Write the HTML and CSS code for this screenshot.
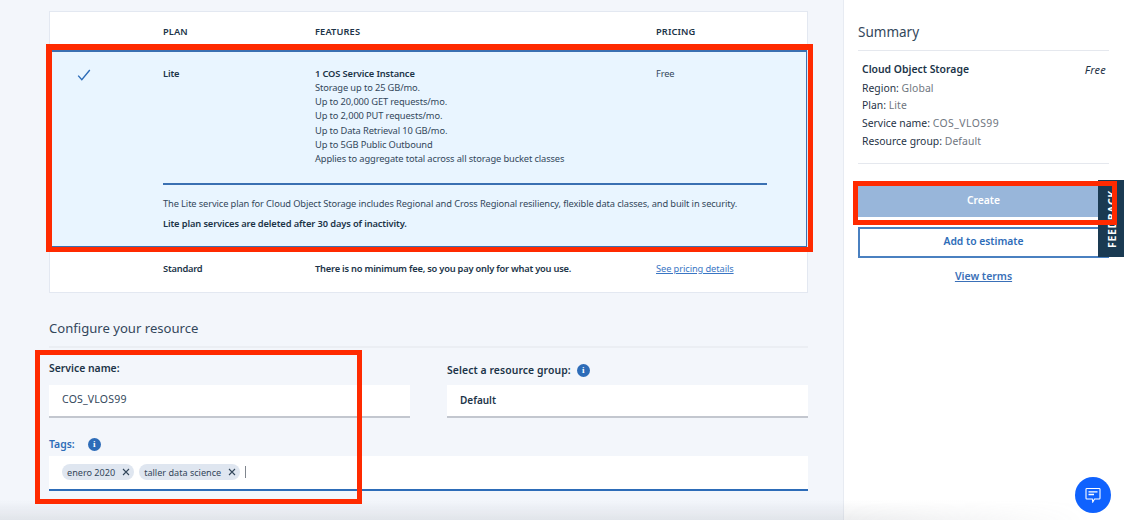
FILE: index.html
```html
<!DOCTYPE html>
<html lang="en">
<head>
<meta charset="utf-8">
<title>Cloud Object Storage</title>
<link rel="stylesheet" href="styles.css">
</head>
<body>
<div class="page">
  <main class="main">
    <section class="plans">
      <div class="row head">
        <div></div><div>PLAN</div><div>FEATURES</div><div>PRICING</div>
      </div>
      <div class="selected">
        <div class="row plan-row">
          <div class="check">
            <svg width="14" height="12" viewBox="0 0 14 12"><path d="M1.200 6.600 4.800 10.600 12.800 1" fill="none" stroke="#2d6cb8" stroke-width="1.400"/></svg>
          </div>
          <div class="strong">Lite</div>
          <div class="features">
            <div class="strong">1 COS Service Instance</div>
            <div>Storage up to 25 GB/mo.</div>
            <div>Up to 20,000 GET requests/mo.</div>
            <div>Up to 2,000 PUT requests/mo.</div>
            <div>Up to Data Retrieval 10 GB/mo.</div>
            <div>Up to 5GB Public Outbound</div>
            <div>Applies to aggregate total across all storage bucket classes</div>
          </div>
          <div>Free</div>
        </div>
        <div class="plan-note">
          <p>The Lite service plan for Cloud Object Storage includes Regional and Cross Regional resiliency, flexible data classes, and built in security.</p>
          <p class="strong">Lite plan services are deleted after 30 days of inactivity.</p>
        </div>
      </div>
      <div class="row standard">
        <div></div>
        <div class="strong tight">Standard</div>
        <div class="strong tight">There is no minimum fee, so you pay only for what you use.</div>
        <div><a class="link" href="#">See pricing details</a></div>
      </div>
    </section>

    <h2 class="config-title">Configure your resource</h2>

    <section class="form">
      <div class="field">
        <label class="label">Service name:</label>
        <div class="input">COS_VLOS99</div>
      </div>
      <div class="field">
        <label class="label low">Select a resource group:<span class="info near">i</span></label>
        <div class="input select">Default</div>
      </div>
      <div class="field wide">
        <label class="label active">Tags:<span class="info">i</span></label>
        <div class="input tags">
          <span class="tag">enero 2020<svg width="8" height="8" viewBox="0 0 8 8"><path d="M1 1 7 7M7 1 1 7" stroke="#33475b" stroke-width="1.100"/></svg></span>
          <span class="tag">taller data science<svg width="8" height="8" viewBox="0 0 8 8"><path d="M1 1 7 7M7 1 1 7" stroke="#33475b" stroke-width="1.100"/></svg></span>
          <span class="caret"></span>
        </div>
      </div>
    </section>
  </main>

  <aside class="summary">
    <h2 class="summary-title">Summary</h2>
    <div class="summary-body">
      <div class="summary-line"><span class="summary-name">Cloud Object Storage</span><em class="free">Free</em></div>
      <div class="kv">Region: <span>Global</span></div>
      <div class="kv">Plan: <span>Lite</span></div>
      <div class="kv">Service name: <span class="code">COS_VLOS99</span></div>
      <div class="kv">Resource group: <span>Default</span></div>
    </div>
    <button class="btn primary">Create</button>
    <button class="btn outline">Add to estimate</button>
    <a class="terms" href="#">View terms</a>
  </aside>
</div>

<div class="feedback"><span>FEEDBACK</span></div>
<div class="bottom-shade"></div>
<button class="chat" aria-label="Chat">
  <svg width="16" height="16" viewBox="0 0 16 16" fill="none"><path d="M1.800 1.500h12.400a.8.8 0 0 1 .8.8v8.900a.8.8 0 0 1-.8.8H9.500l-1.700 3-.5-3H1.800a.8.8 0 0 1-.8-.8V2.300a.8.8 0 0 1 .8-.8Z" stroke="#fff" stroke-width="1.100"/><path d="M3.500 4.800h9M3.500 7.500h5.500" stroke="#fff" stroke-width="1.300"/></svg>
</button>
<div class="mark mark-plan"></div>
<div class="mark mark-form"></div>
<div class="mark mark-create"></div>
</body>
</html>
```
FILE: styles.css
```css
* { box-sizing: border-box; }
html, body { margin: 0; height: 100%; }
body {
  width: 1125px;
  height: 520px;
  overflow: hidden;
  position: relative;
  background: #f3f6fb;
  color: #1f3346;
  font-family: "Noto Sans", "Liberation Sans", sans-serif;
  font-size: 9.300px;
}
.page { display: flex; height: 520px; }
.main { width: 843px; padding: 11px 35px 0 49px; flex: none; }

.plans { background: #fff; border: 1px solid #e3e8f1; height: 282px; }
.row { display: grid; grid-template-columns: 113px 152px 341px 1fr; }
.head { height: 38px; padding-top: 13px; font-weight: 600; line-height: 14px; letter-spacing: .1px; color: #1c3448; }
.selected { height: 198px; background: #e9f5ff; border: 1px solid #3a70b2; border-width: 2px 1px; }
.plan-row { grid-template-columns: 112px 152px 341px 1fr; padding-top: 15px; line-height: 14.150px; color: #33475b; letter-spacing: -.12px; }
.check { padding: 2px 0 0 26px; line-height: 0; }
.strong { font-weight: 600; color: #1c3448; }
.tight { letter-spacing: -.22px; }
.features { height: 116px; }
.plan-note { margin: 0 39px 0 112px; border-top: 2px solid #3a70b2; padding-top: 12px; color: #33475b; line-height: 14px; letter-spacing: -.12px; }
.plan-note p { margin: 0 0 5.500px; }
.plan-note .strong { margin: 0; }
.standard { padding-top: 14px; line-height: 14px; }
.link { color: #3a76c4; letter-spacing: -.1px; }

.config-title { margin: 26px 0 0; font-size: 13.100px; line-height: 18px; font-weight: 400; color: #33475b; height: 29px; border-bottom: 2px solid #ebeef3; }
.form { display: grid; grid-template-columns: 361px 361px; column-gap: 37px; }
.field { display: flex; flex-direction: column; }
.label { height: 37px; padding-top: 13px; font-size: 10.400px; line-height: 14px; font-weight: 600; color: #1c3448; display: flex; align-items: flex-start; }
.label.low { padding-top: 15px; letter-spacing: .08px; }
.input { height: 33px; background: #fff; border-bottom: 2px solid #c3c7cf; padding: 7px 13px 0; font-size: 10.500px; line-height: 14px; color: #33475b; letter-spacing: .2px; }
.select { font-weight: 600; color: #1c3448; font-size: 10px; letter-spacing: 0; padding-top: 8px; }
.wide { grid-column: 1 / 3; }
.label.active { color: #2d6cb8; height: 38px; padding-top: 19px; }
.info {
  width: 13px; height: 13px; margin: 1px 0 0 13px; border-radius: 50%;
  background: #2d6cb8; color: #fff; font-size: 9px; font-weight: 700; line-height: 13px; text-align: center;
  font-family: "Liberation Serif", serif;
}
.info.near { margin-left: 6px; }
.tags { height: 35px; border-bottom-color: #2d6cb8; padding: 8px 13px 0; display: flex; align-items: flex-start; gap: 5px; letter-spacing: 0; }
.tag {
  height: 16px; padding: 0 4px 0 5px; border-radius: 8px; background: #dfe6f0; color: #33475b;
  font-size: 9.100px; line-height: 15px; display: flex; align-items: center; gap: 7px;
}
.caret { width: 1px; height: 12px; margin: 2px 0 0 0; background: #80868e; }

.summary { flex: 1; background: #fff; border-left: 1px solid #e7ebf2; padding: 0 16px 0 14px; line-height: 17.700px; font-size: 10.400px; }
.summary-title { margin: 0; height: 51px; padding-top: 23px; font-size: 13.500px; line-height: 19px; font-weight: 400; color: #33475b; border-bottom: 1px solid #e5e8ee; }
.summary-body { height: 113px; padding: 10px 3px 0 4px; border-bottom: 1px solid #e5e8ee; color: #1f3346; }
.summary-line { display: flex; justify-content: space-between; margin-bottom: 1px; }
.summary-name { font-weight: 600; color: #1c3448; }
.free { font-style: italic; font-size: 11px; letter-spacing: .2px; }
.kv span { color: #6f7680; letter-spacing: .1px; }
.kv .code { letter-spacing: .45px; }
.btn { display: block; width: 251px; border: 0; font-family: inherit; font-size: 10.300px; font-weight: 600; padding: 0 0 3px; }
.primary { height: 31px; margin-top: 22px; background: #98b6da; color: #fff; }
.outline { height: 31px; margin-top: 10px; background: #fff; color: #2d6cb8; border: 2px solid #4a80c0; }
.terms { display: block; width: 251px; margin-top: 10px; text-align: center; font-size: 10.500px; font-weight: 600; color: #3a70b8; }

.feedback {
  position: absolute; left: 1098px; top: 180px; width: 26px; height: 77px; padding: 0 0 0 2px;
  background: #1a3a52; display: flex; align-items: center; justify-content: center;
}
.feedback span { transform: rotate(-90deg); color: #fff; font-size: 10.500px; font-weight: 700; letter-spacing: .6px; white-space: nowrap; }
.chat {
  position: absolute; left: 1075px; top: 477px; width: 36px; height: 36px; padding: 0;
  border: 0; border-radius: 50%; background: #0f62fe; display: flex; align-items: center; justify-content: center;
}
.bottom-shade {
  position: absolute; left: 0; right: 0; bottom: 0; height: 20px;
  background: linear-gradient(rgba(120,125,135,0), rgba(120,125,135,.14)); pointer-events: none;
  -webkit-mask-image: linear-gradient(to right, #000 840px, transparent 1090px);
  mask-image: linear-gradient(to right, #000 840px, transparent 1090px);
}
.mark { position: absolute; border: 5px solid #ff2a00; pointer-events: none; }
.mark-plan { left: 46px; top: 44px; width: 767px; height: 208px; border-width: 6px 5px 5px 6px; }
.mark-form { left: 35px; top: 350px; width: 327px; height: 154px; }
.mark-create { left: 853px; top: 181px; width: 264px; height: 44px; }
```
